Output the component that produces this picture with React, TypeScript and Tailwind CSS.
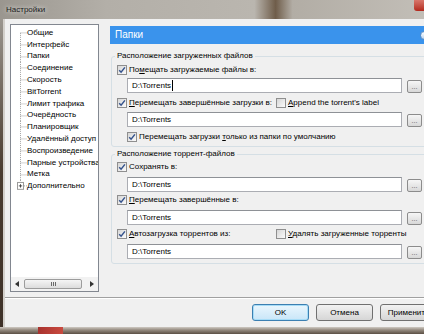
import type { ReactNode } from 'react'

const Check = ({ on = false }: { on?: boolean }) => (
  <span className="flex h-[10px] w-[10px] shrink-0 items-center justify-center border border-[#8f8f8f] bg-gradient-to-br from-[#d6d6d6] to-[#fbfbfb]">
    {on && (
      <svg viewBox="0 0 8 8" className="h-[8px] w-[8px]">
        <path d="M1.2 4.2 3.1 6.2 6.9 1.4" fill="none" stroke="#34528c" strokeWidth="1.5" />
      </svg>
    )}
  </span>
)

const Opt = ({ on, children, className = '' }: { on?: boolean; children: ReactNode; className?: string }) => (
  <div className={`flex h-[12px] shrink-0 items-center gap-[2px] whitespace-nowrap ${className}`}>
    <Check on={on} />
    <span className="leading-[12px]">{children}</span>
  </div>
)

const PathRow = ({ caret = false, className = '' }: { caret?: boolean; className?: string }) => (
  <div className={`flex items-start ${className}`}>
    <div className="ml-[15px] flex h-[15px] w-[275px] items-center border border-[#abadb3] border-t-[#8e9196] bg-white pl-[4px] leading-none">
      D:\Torrents
      {caret && <span className="ml-px h-[11px] w-px bg-black" />}
    </div>
    <div className="ml-[5px] mt-[2px] flex h-[13px] w-[15px] items-end justify-center rounded-[2px] border border-[#8c8c8c] bg-gradient-to-b from-[#f6f6f6] to-[#d8d8d8] pb-[2px] text-[7px] leading-none text-[#555]">
      ...
    </div>
  </div>
)

const treeItems = [
  'Общие',
  'Интерфейс',
  'Папки',
  'Соединение',
  'Скорость',
  'BitTorrent',
  'Лимит трафика',
  'Очерёдность',
  'Планировщик',
  'Удалённый доступ',
  'Воспроизведение',
  'Парные устройства',
  'Метка',
  'Дополнительно',
]

// dotted tree connectors, drawn per row
const Connector = ({ kind }: { kind: 'first' | 'mid' | 'plus' }) => (
  <svg viewBox="0 0 16 12" preserveAspectRatio="none" className="h-full w-[16px] shrink-0">
    <g stroke="#a3a3a3" strokeWidth="1" strokeDasharray="1 1" fill="none">
      {kind === 'first' && <path d="M9.5 6V12" />}
      {kind === 'mid' && <path d="M9.5 0V12" />}
      {kind === 'plus' && <path d="M9.5 0V2.5" />}
      <path d={kind === 'plus' ? 'M13 6H16' : 'M9.5 6H16'} />
    </g>
    {kind === 'plus' && (
      <g>
        <rect x="6.5" y="2.5" width="6" height="7" fill="#fff" stroke="#9a9a9a" />
        <path d="M7.8 6H11.2M9.5 4.3V7.7" stroke="#3a3a3a" strokeWidth="0.9" />
      </g>
    )}
  </svg>
)

const Arrow = ({ dir }: { dir: 'l' | 'r' }) => (
  <svg viewBox="0 0 4 6" className="h-[6px] w-[4px]">
    <path d={dir === 'l' ? 'M4 0V6L0 3Z' : 'M0 0V6L4 3Z'} fill="#333" />
  </svg>
)

function Tree() {
  return (
    <div className="ml-[5px] flex h-[268px] w-[89px] shrink-0 flex-col border border-[#828790] bg-white">
      <div className="flex-1 overflow-hidden pt-[2px]">
        {treeItems.map((t, i) => (
          <div key={t} className="flex h-[11.8px] items-center whitespace-nowrap">
            <Connector kind={i === 0 ? 'first' : i === treeItems.length - 1 ? 'plus' : 'mid'} />
            <span className="leading-none">{t}</span>
          </div>
        ))}
      </div>
      <div className="flex h-[14px] items-center bg-[#f2f2f2]">
        <div className="flex w-[12px] justify-center">
          <Arrow dir="l" />
        </div>
        <div className="ml-px flex h-[10px] w-[58px] items-center justify-center gap-px rounded-[2px] border border-[#9c9c9c] bg-gradient-to-b from-[#f5f5f5] to-[#dcdcdc]">
          <span className="h-[4px] w-px bg-[#6a6a6a]" />
          <span className="h-[4px] w-px bg-[#6a6a6a]" />
          <span className="h-[4px] w-px bg-[#6a6a6a]" />
        </div>
        <div className="flex-1" />
        <div className="flex w-[12px] justify-center">
          <Arrow dir="r" />
        </div>
      </div>
    </div>
  )
}

function Panel() {
  return (
    <div className="ml-[11px] mt-[2px] w-[340px] shrink-0">
      <div className="flex h-[18px] items-center bg-[#3a93ec] pl-[5px] text-white">
        <span className="text-[10px] leading-none">Папки</span>
        <span className="ml-auto mr-[21px] h-[9px] w-[9px] rounded-full border border-[#5d8fc4] bg-gradient-to-b from-white to-[#b9d3ee]" />
      </div>

      <fieldset className="ml-px mt-[6px] w-[330px] rounded-[3px] border border-[#d5dfe5] pb-[3px]">
        <legend className="ml-[3px] px-[2px] leading-[12px]">Расположение загруженных файлов</legend>
        <Opt on className="mt-[2px] pl-[5px]">
          По<span className="underline">м</span>ещать загружаемые файлы в:
        </Opt>
        <PathRow caret className="mt-[2px]" />
        <div className="mt-[4px] flex pl-[5px]">
          <Opt on className="w-[159px]">
            <span className="underline">П</span>еремещать завершённые загрузки в:
          </Opt>
          <Opt>
            <span className="underline">A</span>ppend the torrent's label
          </Opt>
        </div>
        <PathRow className="mt-[3px]" />
        <Opt on className="ml-[15px] mt-[4px]">
          Перемещать загрузки <span className="underline">т</span>олько из папки по умолчанию
        </Opt>
      </fieldset>

      <fieldset className="ml-px mt-px w-[330px] rounded-[3px] border border-[#d5dfe5] pb-[4px]">
        <legend className="ml-[3px] px-[2px] leading-[12px]">Расположение торрент-файлов</legend>
        <Opt on className="mt-px pl-[5px]">
          Сохранять в:
        </Opt>
        <PathRow className="mt-[4px]" />
        <Opt on className="mt-[2px] pl-[5px]">
          <span className="underline">П</span>еремещать завершённые в:
        </Opt>
        <PathRow className="mt-[4px]" />
        <div className="mt-[3px] flex pl-[5px]">
          <Opt on className="w-[159px]">
            <span className="underline">А</span>втозагрузка торрентов из:
          </Opt>
          <Opt>
            <span className="underline">У</span>далять загруженные торренты
          </Opt>
        </div>
        <PathRow className="mt-[4px]" />
      </fieldset>
    </div>
  )
}

export default function App() {
  return (
    <div className="flex h-[334px] w-[424px] flex-col overflow-hidden bg-[#3e342b] font-['Liberation_Sans',Arial,sans-serif] text-[8px] text-black">
      {/* title bar */}
      <div className="flex h-[19px] shrink-0 items-start bg-[linear-gradient(90deg,#9a968f_0%,#b3afa8_25%,#bab6af_60%,#6f5d4a_65%,#b2ada5_69%,#c2beb7_100%)]">
        <span className="ml-[6px] mt-[4px] text-[8px] leading-[12px] text-[#1c1c1c] [text-shadow:0_0_5px_#fff]">Настройки</span>
        <span className="ml-auto h-[11px] w-[10px] rounded-bl-[3px] bg-gradient-to-b from-[#d8766b] to-[#b3261b]" />
      </div>

      <div className="flex h-[308px] shrink-0">
        <div className="flex w-[5px] shrink-0">
          <div className="w-[3px] bg-gradient-to-b from-[#9b968f] via-[#4a3c30] to-[#3e3128]" />
          <div className="w-[2px] bg-[#d3d0cb]" />
        </div>

        <div className="flex flex-1 flex-col bg-[#f0f0f0]">
          <div className="flex h-[273px] shrink-0 items-start pt-[5px]">
            <Tree />
            <Panel />
          </div>

          <div className="mt-[5px] h-px bg-[#a0a0a0]" />
          <div className="h-px bg-white" />

          <div className="mt-[5px] flex gap-[7px] pl-[247px]">
            <div className="flex h-[17px] w-[57px] shrink-0 items-center justify-center rounded-[3px] border border-[#3c7fb1] bg-gradient-to-b from-[#eaf6fd] to-[#c9e6f8] shadow-[inset_0_0_0_1px_#a6dcf7]">
              OK
            </div>
            <div className="flex h-[17px] w-[57px] shrink-0 items-center justify-center rounded-[3px] border border-[#707070] bg-gradient-to-b from-[#f2f2f2] to-[#d6d6d6]">
              Отмена
            </div>
            <div className="flex h-[17px] w-[57px] shrink-0 items-center justify-center rounded-[3px] border border-[#707070] bg-gradient-to-b from-[#f2f2f2] to-[#d6d6d6]">
              Применить
            </div>
          </div>
        </div>
      </div>

      <div className="h-[7px] shrink-0 bg-[linear-gradient(90deg,transparent_38px,#a8322e_38px,#c94a3f_63px,transparent_63px),linear-gradient(180deg,#cfcac3_0%,#988e83_40%,#5b4f44_100%)]" />
    </div>
  )
}
